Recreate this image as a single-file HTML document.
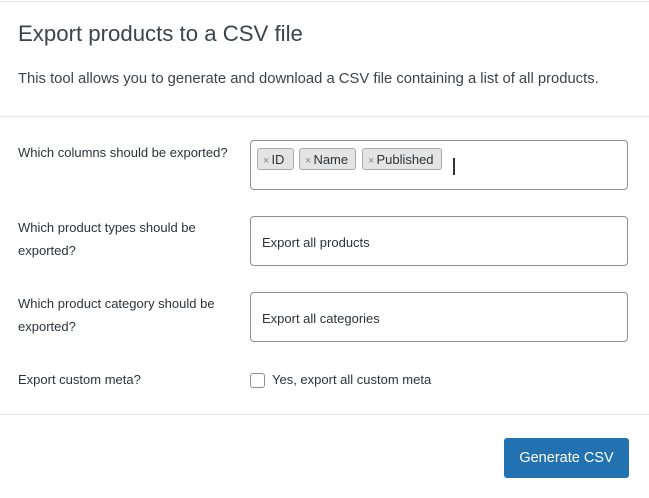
<!DOCTYPE html>
<html><head><style>
body{margin:0;width:649px;height:498px;background:#fff;font-family:"Liberation Sans",sans-serif;color:#3c434a;position:relative;overflow:hidden}
.a{position:absolute}
.line{position:absolute;left:0;width:649px;height:1px;background:#e5e5e5}
.lbl{position:absolute;left:18px;font-size:13px;line-height:23px;color:#2c3338;width:215px}
.inp{position:absolute;left:250px;width:376px;height:48px;border:1px solid #8c8f94;border-radius:4px;font-size:13px;color:#2c3338}
.tag{position:absolute;top:7px;height:22px;line-height:21px;border:1px solid #aaa;border-radius:3px;background:#e4e4e4;box-sizing:border-box;font-size:13px;padding:0 5px;color:#2c3338}
.tag span{color:#888;font-size:11px;margin-right:2px}
</style></head><body>
<div class="line" style="top:1px"></div>
<div class="a" style="left:18px;top:21px;font-size:22.2px;color:#3c434a">Export products to a CSV file</div>
<div class="a" style="left:18px;top:71px;font-size:14.8px;color:#3c434a">This tool allows you to generate and download a CSV file containing a list of all products.</div>
<div class="line" style="top:116px"></div>

<div class="lbl" style="top:141px">Which columns should be exported?</div>
<div class="inp" style="top:140px">
<div class="tag" style="left:6px;width:37px"><span>×</span>ID</div>
<div class="tag" style="left:48px;width:57px"><span>×</span>Name</div>
<div class="tag" style="left:111px;width:80px"><span>×</span>Published</div>
<div class="a" style="left:202px;top:17px;width:2px;height:17px;background:#333"></div>
</div>

<div class="lbl" style="top:216px">Which product types should be exported?</div>
<div class="inp" style="top:216px"><div class="a" style="left:11px;top:18px">Export all products</div></div>

<div class="lbl" style="top:292px">Which product category should be exported?</div>
<div class="inp" style="top:292px"><div class="a" style="left:11px;top:18px">Export all categories</div></div>

<div class="lbl" style="top:368px">Export custom meta?</div>
<div class="a" style="left:250px;top:373px;width:13px;height:13px;border:1px solid #8c8f94;border-radius:3px"></div>
<div class="a" style="left:272px;top:372px;font-size:13px;color:#2c3338">Yes, export all custom meta</div>

<div class="line" style="top:414px"></div>
<div class="a" style="left:504px;top:438px;width:125px;height:40px;background:#2271b1;border-radius:3px;color:#fff;font-size:14.5px;line-height:40px;text-align:center">Generate CSV</div>
</body></html>
